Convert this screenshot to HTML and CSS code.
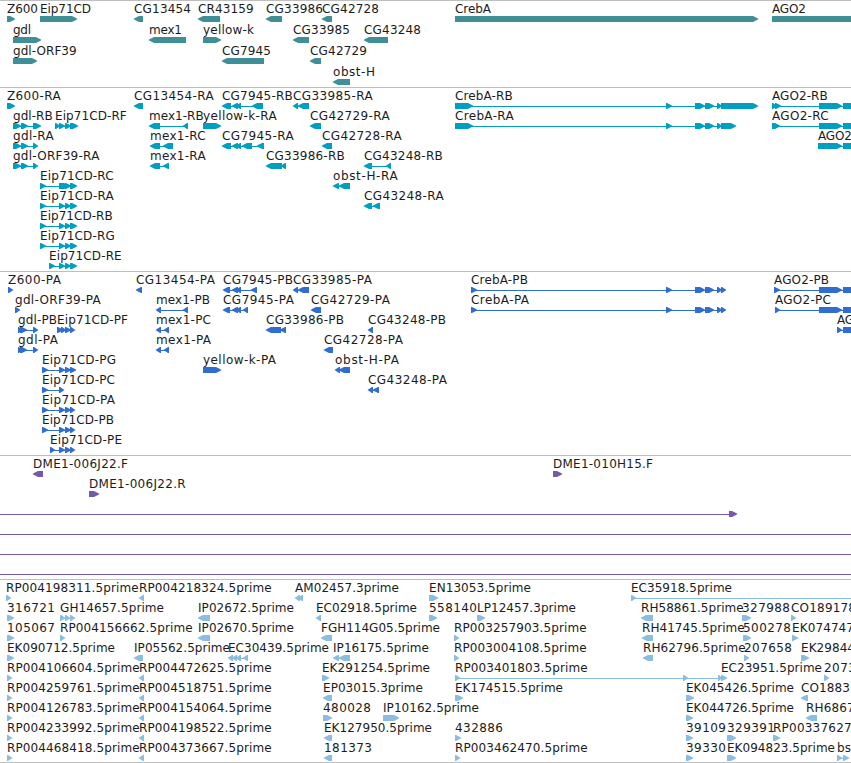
FILE: index.html
```html
<!DOCTYPE html>
<html lang="en">
<head>
    <meta charset="UTF-8">
    <meta name="viewport" content="width=device-width, initial-scale=1.0">
    <title>Genome Browser</title>
    <link rel="stylesheet" href="styles.css">
</head>
<body>
    <div class="browser" id="browser"></div>
    <script src="tracks.js"></script>
</body>
</html>
```

FILE: styles.css
```css
body {
    margin: 0;
    background: white;
    overflow: hidden;
}

.browser {
    display: flex;
    flex-direction: column;
    width: 851px;
    border-bottom: 1px solid #bebebe;
}

.track {
    box-sizing: border-box;
    border-top: 1px solid #bebebe;
    overflow: hidden;
}

.track svg {
    display: block;
    width: 851px;
    height: 100%;
}

.track text {
    font-family: "DejaVu Sans", sans-serif;
    font-size: 12px;
    fill: #1c1c1c;
}

.gene { height: 87px; fill: #408f96; }
.transcript { height: 184px; fill: #009fc1; }
.protein { height: 184px; fill: #306dcf; }
.bac { height: 124px; fill: #7759ab; }
.est { height: 183px; fill: #8abddf; }
```

FILE: tracks.js
```javascript
// each feature: "row|label|strand|start-end,start-end..."
const tracks = [
    { type: 'gene', pitch: 21, features: [
        '0|Z600|>|7-15', '0|Eip71CD|>|40-77', '0|CG13454|<|134-143', '0|CR43159|<|198-220',
        '0|CG33986|<|266-282', '0|CG42728|<|322-332', '0|CrebA|>|455-758', '0|AGO2|>|772-860',
        '1|gdl|>|13-41', '1|mex1|<|149-186', '1|yellow-k|>|203-221', '1|CG33985|<|293-309', '1|CG43248|<|364-388',
        '2|gdl-ORF39|>|13-37', '2|CG7945|<|222-264', '2|CG42729|<|310-321',
        '3|obst-H|<|333-350'
    ] },
    { type: 'transcript', pitch: 20, features: [
        '0|Z600-RA|>|7-15', '0|CG13454-RA|<|134-143', '0|CG7945-RB|<|222-231,232-238,236-241,252-263',
        '0|CG33985-RA|<|293-298,298-309', '0|CrebA-RB|>|455-473,666-672,695-705,705-714,717-722,721-758',
        '0|AGO2-RB|>|772-777,775-781,819-842,843-860',
        '1|gdl-RB|>|13-21,21-28,33-41', '1|Eip71CD-RF|>|55-60,59-65,65-71,70-78', '1|mex1-RB|<|149-160,183-188',
        '1|yellow-k-RA|>|203-221', '1|CG42729-RA|<|310-321',
        '1|CrebA-RA|>|455-473,666-672,695-705,705-714,717-722,721-736', '1|AGO2-RC|>|772-780,819-842,843-860',
        '2|gdl-RA|>|13-21,21-28,33-38', '2|mex1-RC|<|150-160,163-173',
        '2|CG7945-RA|<|222-231,232-238,236-241,242-252,257-264', '2|CG42728-RA|<|322-332', '2|AGO2|>|818-842,843-860',
        '3|gdl-ORF39-RA|>|13-21,21-28,33-38', '3|mex1-RA|<|150-160,163-169', '3|CG33986-RB|<|266-282,281-286',
        '3|CG43248-RB|<|364-372,386-391',
        '4|Eip71CD-RC|>|40-46,59-69,65-71,70-77', '4|obst-H-RA|<|333-339,339-350',
        '5|Eip71CD-RA|>|40-46,59-65,65-71,70-77', '5|CG43248-RA|<|364-372,373-380',
        '6|Eip71CD-RB|>|40-46,59-65,65-71,70-77',
        '7|Eip71CD-RG|>|40-46,59-65,65-71,70-77',
        '8|Eip71CD-RE|>|49-55,59-65,65-71,70-77'
    ] },
    { type: 'protein', pitch: 20, features: [
        '0|Z600-PA|>|8-13', '0|CG13454-PA|<|136-142', '0|CG7945-PB|<|223-230,232-238,236-241,251-257',
        '0|CG33985-PA|<|293-298,298-309', '0|CrebA-PB|>|471-477,666-672,695-705,705-714,717-722,721-726',
        '0|AGO2-PB|>|774-780,819-842,843-860',
        '1|gdl-ORF39-PA|>|15-20', '1|mex1-PB|<|156-161,183-188', '1|CG7945-PA|<|223-230,232-238,236-241,243-248',
        '1|CG42729-PA|<|311-321', '1|CrebA-PA|>|471-477,666-672,695-705,705-714,717-722,721-726',
        '1|AGO2-PC|>|775-780,819-842,843-860',
        '2|gdl-PB|>|18-22,20-27,33-38', '2|Eip71CD-PF|>|57-63,61-66,65-71,70-75', '2|mex1-PC|<|156-161,164-169',
        '2|CG33986-PB|<|266-281,280-286', '2|CG43248-PB|<|368-373', '2|AG|>|837-842,843-860',
        '3|gdl-PA|>|18-22,20-27,33-38', '3|mex1-PA|<|156-161,164-169', '3|CG42728-PA|<|324-333',
        '4|Eip71CD-PG|>|42-48,59-65,65-71,70-76', '4|yellow-k-PA|>|203-221', '4|obst-H-PA|<|335-340,339-350',
        '5|Eip71CD-PC|>|42-48,59-64', '5|CG43248-PA|<|368-373,373-379',
        '6|Eip71CD-PA|>|42-48,59-65,65-71,70-75',
        '7|Eip71CD-PB|>|42-48,59-65,65-71,70-75',
        '8|Eip71CD-PE|>|50-55,59-65,65-71,70-75'
    ] },
    { type: 'bac', pitch: 20, features: [
        '0|DME1-006J22.F|<|33-43', '0|DME1-010H15.F|>|553-562',
        '1|DME1-006J22.R|>|89-99',
        '2||>|-20--10,729-737',
        '3||>|-20--10,860-870',
        '4||>|-20--10,860-870',
        '5||>|-20--10,860-870'
    ] },
    { type: 'est', pitch: 20, features: [
        '0|RP004198311.5prime|>|6-11', '0|RP004218324.5prime|<|139-144', '0|AM02457.3prime|<|295-300,298-303',
        '0|EN13053.5prime|>|429-438', '0|EC35918.5prime|>|631-636,860-870',
        '1|316721|>|7-14', '1|GH14657.5prime|>|60-65,65-70,70-75', '1|IP02672.5prime|<|198-210',
        '1|EC02918.5prime|<|316-321', '1|558140|>|429-437', '1|LP12457.3prime|>|477-485',
        '1|RH58861.5prime|<|641-653', '1|327988|>|742-751', '1|CO189178|>|791-796',
        '2|105067|>|7-14', '2|RP004156662.5prime|>|60-65', '2|IP02670.5prime|<|198-210',
        '2|FGH114G05.5prime|<|321-332', '2|RP003257903.5prime|>|454-459', '2|RH41745.5prime|<|642-653',
        '2|500278|>|743-751', '2|EK074747|>|792-798',
        '3|EK090712.5prime|>|7-14', '3|IP05562.5prime|<|134-143', '3|EC30439.5prime|<|228-233,232-237,236-241,243-248',
        '3|IP16175.5prime|<|333-339,339-350', '3|RP003004108.5prime|>|454-459', '3|RH62796.5prime|<|643-653',
        '3|207658|>|744-749', '3|EK29844|>|801-809',
        '4|RP004106604.5prime|>|7-12', '4|RP004472625.5prime|<|139-144', '4|EK291254.5prime|>|322-329',
        '4|RP003401803.5prime|>|455-460,683-688,718-722', '4|EC23951.5prime|>|721-727', '4|2073|>|824-829',
        '5|RP004259761.5prime|>|7-12', '5|RP004518751.5prime|<|139-144', '5|EP03015.3prime|<|323-332',
        '5|EK174515.5prime|>|455-463', '5|EK045426.5prime|>|686-694', '5|CO1883|<|801-808',
        '6|RP004126783.5prime|>|7-12', '6|RP004154064.5prime|<|139-144', '6|480028|>|323-332',
        '6|IP10162.5prime|>|383-399', '6|EK044726.5prime|>|686-693', '6|RH6867|<|806-817',
        '7|RP004233992.5prime|>|7-12', '7|RP004198522.5prime|<|139-144', '7|EK127950.5prime|<|324-332',
        '7|432886|>|455-461', '7|39109|>|686-693', '7|329391|>|727-736', '7|RP00337627|>|773-780',
        '8|RP004468418.5prime|>|7-12', '8|RP004373667.5prime|<|139-144', '8|181373|<|324-332',
        '8|RP003462470.5prime|>|455-460', '8|39330|>|686-693', '8|EK094823.5prime|>|727-736', '8|bs|>|837-842,843-849'
    ] }
];

// letter widths in pixels, anything not listed is 8
const widths = {
    Z: 7, E: 7, i: 3, l: 3, I: 3, G: 9, O: 9, H: 9, D: 9, N: 9, M: 10, F: 6, L: 6, P: 7, B: 7, K: 7,
    J: 4, '.': 4, r: 5, m: 11, e: 7, x: 7, k: 7, y: 6, w: 10, s: 6, t: 4, '-': 7, R: 7.7, g: 7.5, d: 7.5
};

function labelWidth(label) {
    return [...label].reduce((sum, ch) => sum + (widths[ch] || 8), 0);
}

function drawBlock(start, end, strand, y) {
    const head = Math.min(end - start, 6);
    // slightly bulged arrow head
    if (strand === '>') {
        const neck = end - head + 1;
        return `<path d="M${start} ${y}H${neck}L${end - 1} ${y + 2}L${end + 0.5} ${y + 3}L${end - 1} ${y + 4}L${neck} ${y + 6}H${start}z"/>`;
    }
    const neck = start + head - 1;
    return `<path d="M${end} ${y}H${neck}L${start + 1} ${y + 2}L${start - 0.5} ${y + 3}L${start + 1} ${y + 4}L${neck} ${y + 6}H${end}z"/>`;
}

function drawFeature(feature, pitch) {
    const [row, label, strand, parts] = feature.split('|');
    const top = row * pitch;
    const blocks = parts.split(',').map(p => p.match(/^(-?\d+)-(-?\d+)$/).slice(1).map(Number));
    const start = blocks[0][0];
    const end = blocks[blocks.length - 1][1];
    let svg = '';
    if (blocks.length > 1) {
        svg += `<rect x="${start + 1}" y="${top + 18}" width="${end - start - 2}" height="1"/>`;
    }
    svg += blocks.map(b => drawBlock(b[0], b[1], strand, top + 15)).join('');
    if (label) {
        svg += `<text x="${start}" y="${top + 12}" textLength="${labelWidth(label)}">${label}</text>`;
    }
    return svg;
}

document.getElementById('browser').innerHTML = tracks.map(track => `
    <div class="track ${track.type}">
        <svg>${track.features.map(f => drawFeature(f, track.pitch)).join('')}</svg>
    </div>`).join('');
```
